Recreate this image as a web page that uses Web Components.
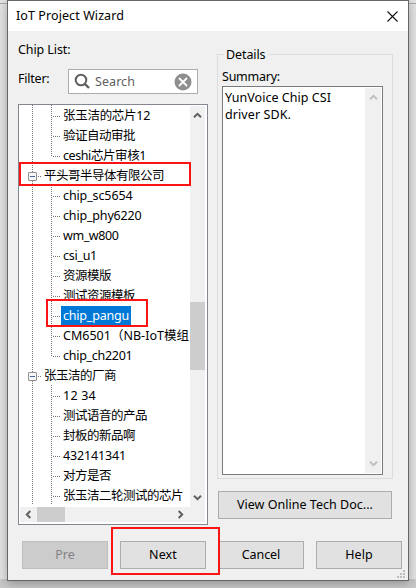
<!DOCTYPE html>
<html lang="zh">
<head>
<meta charset="utf-8">
<title>IoT Project Wizard</title>
<style>
html,body{margin:0;width:416px;height:588px;overflow:hidden}
body{font:12.5px/20px "Noto Sans","Noto Sans CJK SC",sans-serif;color:#000;background:#d0d0d0}
</style>
</head>
<body>
<wizard-window></wizard-window>
<script>
const define=(name,html,setup)=>customElements.define(name,class extends HTMLElement{
  connectedCallback(){
    if(this.shadowRoot)return;
    const r=this.attachShadow({mode:'open'});
    r.innerHTML=typeof html==='function'?html(this):html;
    if(setup)setup(this,r);
  }
});

/* Text run spread to a given advance width. */
define('fit-text',`<style>:host{display:inline-block;white-space:pre}span{display:inline-block}</style><span><slot></slot></span>`,(el,r)=>{
  const w=+el.getAttribute('w'); if(!w)return;
  const s=r.querySelector('span'), n=[...el.textContent].length;
  s.style.letterSpacing=((w-s.getBoundingClientRect().width)/n)+'px';
});

define('push-button',`<style>
:host{display:flex;box-sizing:border-box;height:28px;border:1px solid #adadad;background:#e1e1e1;align-items:center;justify-content:center}
:host([disabled]){background:#ccc;border-color:#bfbfbf;color:#838383}
</style><slot></slot>`);

define('arrow-icon',el=>`<style>:host{display:block;width:9px;height:9px}svg{display:block;transform:rotate(${el.getAttribute('turn')||0}deg)}</style>
<svg width="9" height="9" viewBox="0 0 9 9"><path d="M1 6.3 4.5 2.8 8 6.3" fill="none" stroke="${el.getAttribute('color')||'#606060'}" stroke-width="2"/></svg>`);

define('search-field',`<style>
:host{display:flex;box-sizing:border-box;width:130px;height:25px;border:1px solid #abadb3;background:#fff;align-items:center;padding:0 5px;color:#606060}
fit-text{margin-left:4px;flex:1}
svg{display:block}
</style>
<svg width="17" height="17" viewBox="0 0 17 17"><circle cx="7" cy="7" r="5.3" fill="none" stroke="#606060" stroke-width="2"/><path d="M10.8 10.8 15 15" stroke="#606060" stroke-width="2.4"/></svg>
<fit-text w="40">Search</fit-text>
<svg width="18" height="18" viewBox="0 0 18 18"><circle cx="9" cy="9" r="8.5" fill="#8f8f8f"/><path d="M5 5 13 13M13 5 5 13" stroke="#fff" stroke-width="1.8"/></svg>`);

define('tree-row',el=>{
  const p=el.hasAttribute('parent');
  return `<style>
:host{display:flex;height:20px;align-items:flex-start;box-sizing:border-box;white-space:pre;background:
 repeating-linear-gradient(#777 0 1px,transparent 1px 2px) 13px 0/1px 20px no-repeat
 ${p?'':`,repeating-linear-gradient(#777 0 1px,transparent 1px 2px) 32px 0/1px ${el.hasAttribute('last')?11:20}px no-repeat`}
 ,repeating-linear-gradient(90deg,#777 0 1px,transparent 1px 2px) ${p?19:34}px 11px/${p?3:7}px 1px no-repeat;
 padding-left:${p?9:42}px}
i{box-sizing:border-box;width:9px;height:9px;border:1px solid #919191;border-radius:1px;background:linear-gradient(#4b63a7,#4b63a7) 1px 3px/5px 1px no-repeat,#f8f8f8;margin:7px 5px 0 0}
b{font-weight:400;height:19px;line-height:19px;padding:0 2px;margin-top:1px}
:host([selected]) b{background:#0078d7;color:#fff}
</style>${p?'<i></i>':''}<b><slot></slot></b>`});

define('tree-view',`<style>
:host{display:grid;box-sizing:border-box;width:190px;height:421px;border:1px solid #828790;background:#fff;grid-template:402px 15px/171px 15px;padding:0}
.rows{overflow:hidden}
.v,.h,.c{background:#f0f0f0}
.v{display:flex;flex-direction:column;align-items:center;padding:5px 0 5px;margin-top:1px;box-sizing:border-box}
.v i{width:15px;height:68px;background:#cdcdcd;margin:182px 0 auto}
.h{display:flex;align-items:center;padding:0 5px 0 4px;margin-left:1px}
.h i{width:28px;height:15px;background:#cdcdcd;margin:0 auto 0 4px}
</style>
<div class="rows">
<tree-row><fit-text w="87">张玉洁的芯片12</fit-text></tree-row>
<tree-row><fit-text w="72">验证自动审批</fit-text></tree-row>
<tree-row last><fit-text w="83">ceshi芯片审核1</fit-text></tree-row>
<tree-row parent><fit-text w="120">平头哥半导体有限公司</fit-text></tree-row>
<tree-row><fit-text w="69.5">chip_sc5654</fit-text></tree-row>
<tree-row><fit-text w="78.5">chip_phy6220</fit-text></tree-row>
<tree-row><fit-text w="55.5">wm_w800</fit-text></tree-row>
<tree-row><fit-text w="34">csi_u1</fit-text></tree-row>
<tree-row><fit-text w="48">资源模版</fit-text></tree-row>
<tree-row><fit-text w="72">测试资源模板</fit-text></tree-row>
<tree-row selected><fit-text w="66">chip_pangu</fit-text></tree-row>
<tree-row><fit-text w="126">CM6501（NB-IoT模组</fit-text></tree-row>
<tree-row last><fit-text w="69.5">chip_ch2201</fit-text></tree-row>
<tree-row parent><fit-text w="72">张玉洁的厂商</fit-text></tree-row>
<tree-row><fit-text w="33">12 34</fit-text></tree-row>
<tree-row><fit-text w="84">测试语音的产品</fit-text></tree-row>
<tree-row><fit-text w="72">封板的新品啊</fit-text></tree-row>
<tree-row><fit-text w="63">432141341</fit-text></tree-row>
<tree-row><fit-text w="48">对方是否</fit-text></tree-row>
<tree-row><fit-text w="120">张玉洁二轮测试的芯片</fit-text></tree-row>
</div>
<div class="v"><arrow-icon></arrow-icon><i></i><arrow-icon turn="180"></arrow-icon></div>
<div class="h"><arrow-icon turn="-90"></arrow-icon><i></i><arrow-icon turn="90"></arrow-icon></div><div class="c"></div>`);

define('details-group',`<style>
:host{display:block;position:relative;box-sizing:border-box;width:176px;height:425px;border:1px solid #dcdcdc;padding:12px 4px 0}
.legend{position:absolute;left:6px;top:-10px;background:#f0f0f0;padding:0 2px;height:20px}
.label{height:19px}
.area{display:flex;box-sizing:border-box;width:161px;height:389px;border:1px solid #7a7a7a;background:#fff;padding:1px 1px 1px 2px;justify-content:space-between}
p{margin:0;line-height:17px;padding-top:1px}
.bar{width:16px;background:#f0f0f0;display:flex;flex-direction:column;justify-content:space-between;align-items:center;padding:5px 0;box-sizing:border-box}
</style>
<div class="legend"><fit-text w="39.5">Details</fit-text></div>
<div class="label"><fit-text w="58">Summary:</fit-text></div>
<div class="area"><p><fit-text w="106">YunVoice Chip CSI</fit-text><br><fit-text w="66">driver SDK.</fit-text></p>
<div class="bar"><arrow-icon color="#bfbfbf"></arrow-icon><arrow-icon color="#bfbfbf" turn="180"></arrow-icon></div></div>`);

define('mark-box',`<style>:host{position:absolute;box-sizing:border-box;border:2px solid #fc1414}</style>`);

define('wizard-window',`<style>
:host{display:block;position:relative;width:416px;height:588px;box-sizing:border-box;padding-left:7px;background:linear-gradient(#a8a8a8,#a8a8a8) 0 3px/100% 1px no-repeat,linear-gradient(#c8c8c8,#c8c8c8) 0 579px/100% 9px no-repeat,#e4e4e4}
.win{width:402px;height:581px;box-sizing:border-box;border:1px solid #666;background:#f0f0f0;box-shadow:0 2px 10px rgba(0,0,0,.3);display:flex;flex-direction:column}
header{height:30px;background:#fff;display:flex;align-items:center;justify-content:space-between;padding:0 10px 0 8px}
.main{display:flex;gap:9px;padding:9px 0 0 10px;height:484px}
.left{width:190px}
.search{display:flex;justify-content:space-between;align-items:center;width:180px;height:25px;margin:9px 0 10px}
.search>fit-text{margin-top:-5px}
.right{padding-top:14px}
.right push-button{width:174px;margin:12px 0 0 1px}
footer{display:flex;gap:12px;padding:17px 0 0 14px}
footer push-button{width:86px}
.grip{position:absolute;left:397px;top:570px}
</style>
<div class="win">
<header><fit-text w="108">IoT Project Wizard</fit-text><svg width="11" height="11" viewBox="0 0 11 11"><path d="M.5.5 10.5 10.5M10.5.5.5 10.5" stroke="#111" stroke-width="1.1"/></svg></header>
<div class="main">
<div class="left"><fit-text w="52.5">Chip List:</fit-text><div class="search"><fit-text w="31.5">Filter:</fit-text><search-field></search-field></div><tree-view></tree-view></div>
<div class="right"><details-group></details-group><push-button><fit-text w="136">View Online Tech Doc...</fit-text></push-button></div>
</div>
<footer><push-button disabled><fit-text w="19.5">Pre</fit-text></push-button><push-button><fit-text w="28">Next</fit-text></push-button><push-button><fit-text w="38.5">Cancel</fit-text></push-button><push-button><fit-text w="27.5">Help</fit-text></push-button></footer>
</div>
<mark-box style="left:19px;top:162px;width:172px;height:24px"></mark-box>
<mark-box style="left:46px;top:299px;width:102px;height:28px"></mark-box>
<mark-box style="left:111px;top:527px;width:109px;height:48px"></mark-box>
<svg class="grip" width="9" height="9" fill="#bdbdbd"><path d="M6 0h2v2H6zM3 3h2v2H3zM6 3h2v2H6zM0 6h2v2H0zM3 6h2v2H3zM6 6h2v2H6z"/></svg>`);
</script>
</body>
</html>
